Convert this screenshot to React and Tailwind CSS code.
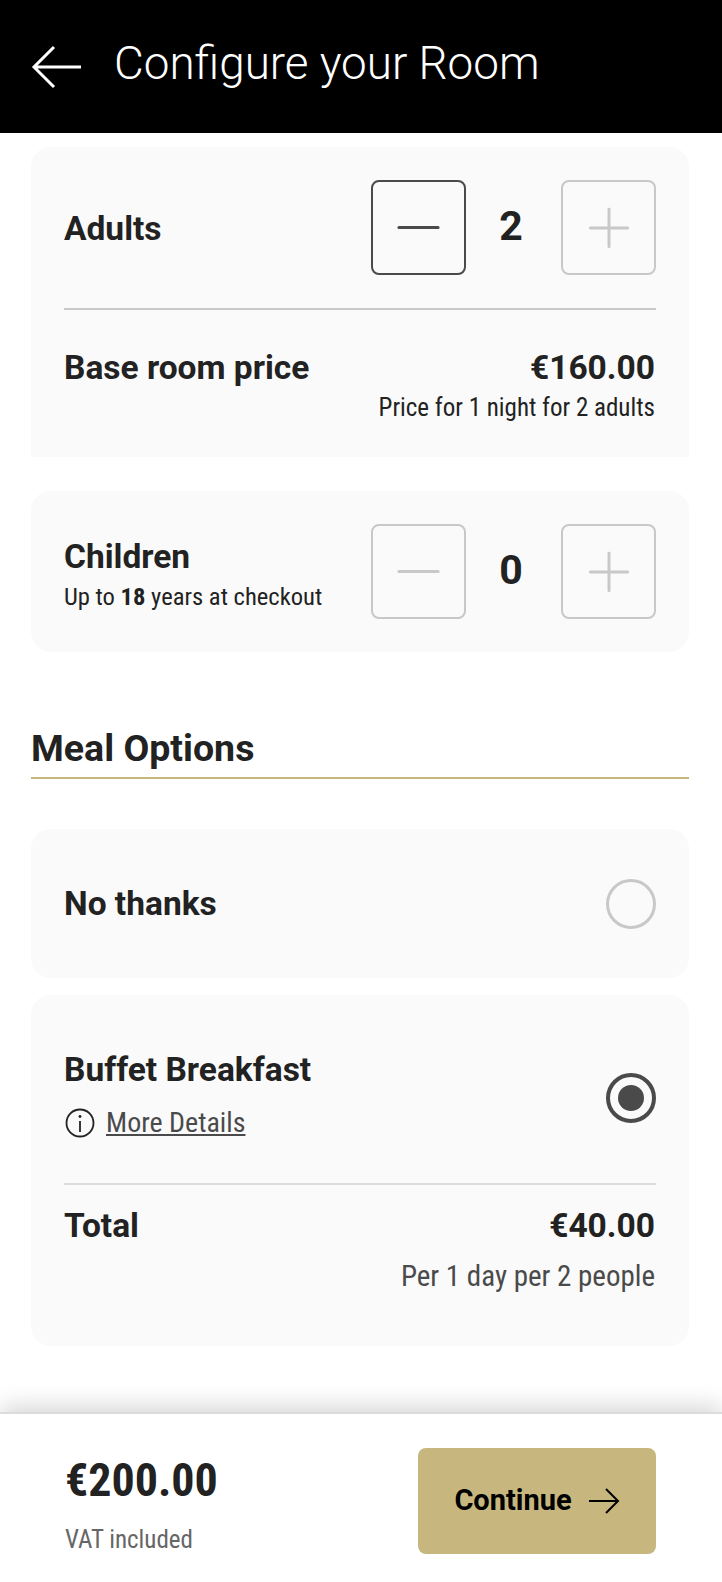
import React from 'react';
import { Minus, Plus } from 'lucide-react';

const Stepper = ({ value, minusActive }) => (
    <div className="flex items-center">
        <button className={`w-[95px] h-[95px] rounded-[8px] border-2 flex items-center justify-center ${minusActive ? 'border-[#4a4a4a] text-[#4a4a4a]' : 'border-[#c8c8c8] text-[#c8c8c8]'}`}>
            <Minus size={67} strokeWidth={1.1} className="shrink-0" />
        </button>
        <span className="w-[90px] mr-[5px] text-center text-[41px] leading-none font-bold text-[#222] -translate-y-[1px]">{value}</span>
        <button className="w-[95px] h-[95px] rounded-[8px] border-2 border-[#c8c8c8] text-[#c8c8c8] flex items-center justify-center">
            <Plus size={64} strokeWidth={1.1} className="shrink-0" />
        </button>
    </div>
);

const BackArrow = () => (
    <svg width="52" height="44" viewBox="0 0 52 44" fill="none" stroke="#fff" strokeWidth="3" className="ml-[31px] shrink-0">
        <path d="M50 22H3M23 2 3 22l20 20" />
    </svg>
);

const NextArrow = () => (
    <svg width="32" height="26" viewBox="0 0 32 26" fill="none" stroke="#000" strokeWidth="2">
        <path d="M1 13h29M18 1l12 12-12 12" />
    </svg>
);

const InfoIcon = () => (
    <svg width="30" height="30" viewBox="0 0 30 30" fill="none" stroke="#222" strokeWidth="1.8">
        <circle cx="15" cy="15" r="13.5" />
        <path d="M15 13v11" />
        <circle cx="15" cy="8.5" r="1.4" fill="#222" stroke="none" />
    </svg>
);

const App = () => {
    return (
        <div className="h-[1582px] w-[722px] flex flex-col bg-white overflow-hidden font-['Roboto',sans-serif] text-[#222]">
            <header className="h-[133px] bg-black text-white flex items-center shrink-0">
                <BackArrow />
                <h1 className="ml-[31px] text-[45.8px] font-light leading-none -translate-y-[3px]">Configure your Room</h1>
            </header>

            <main className="flex-1 pl-[31px] pr-[33px]">
                <section className="mt-[14px] h-[310px] bg-[#fafafa] rounded-t-[20px] px-[33px]">
                    <div className="h-[163px] flex items-center justify-between border-b-2 border-[#c8c8c8]">
                        <span className="pt-[4px] text-[33.5px] font-bold">Adults</span>
                        <Stepper value="2" minusActive />
                    </div>
                    <div className="mt-[36px] pr-[1px] flex justify-between text-[33.5px] font-bold leading-[44px]">
                        <span>Base room price</span>
                        <span>€160.00</span>
                    </div>
                    <p className="mt-[2px] pr-[1px] text-right text-[25px] leading-[32px] [font-stretch:85%]">Price for 1 night for 2 adults</p>
                </section>

                <section className="mt-[34px] h-[161px] bg-[#fafafa] rounded-[20px] px-[33px] flex items-center justify-between">
                    <div className="pt-[5px]">
                        <p className="text-[33.5px] font-bold leading-[44px]">Children</p>
                        <p className="mt-[2px] text-[24.6px] leading-[32px] [font-stretch:85%]">Up to <b>18</b> years at checkout</p>
                    </div>
                    <Stepper value="0" />
                </section>

                <h2 className="mt-[68px] h-[59px] border-b-2 border-[#c4b67c] text-[37.5px] font-bold leading-[56px]">Meal Options</h2>

                <section className="mt-[50px] h-[149px] bg-[#fafafa] rounded-[20px] px-[33px] flex items-center justify-between">
                    <span className="pt-[2px] text-[33.5px] font-bold">No thanks</span>
                    <span className="w-[50px] h-[50px] rounded-full border-[3px] border-[#c8c8c8]" />
                </section>

                <section className="mt-[17px] h-[351px] bg-[#fafafa] rounded-[20px] px-[33px]">
                    <div className="h-[190px] pt-[12px] border-b-2 border-[#dcdcdc] flex items-center justify-between">
                        <div className="pb-[4px]">
                            <p className="text-[33.5px] font-bold leading-[44px]">Buffet Breakfast</p>
                            <div className="mt-[15px] flex items-center gap-[11px] ml-[1px]">
                                <InfoIcon />
                                <a className="text-[28px] leading-[32px] text-[#4a4a4a] underline [font-stretch:85%]">More Details</a>
                            </div>
                        </div>
                        <span className="mt-[6px] w-[50px] h-[50px] rounded-full border-[4px] border-[#4a4a4a] flex items-center justify-center">
                            <span className="w-[26px] h-[26px] rounded-full bg-[#4a4a4a]" />
                        </span>
                    </div>
                    <div className="mt-[19px] pr-[1px] flex justify-between text-[33.5px] font-bold leading-[44px]">
                        <span>Total</span>
                        <span>€40.00</span>
                    </div>
                    <p className="mt-[10px] pr-[1px] text-right text-[29px] leading-[36px] text-[#4a4a4a] [font-stretch:85%]">Per 1 day per 2 people</p>
                </section>
            </main>

            <footer className="h-[170px] pt-[6px] shrink-0 bg-white border-t-2 border-[#dcdcdc] shadow-[0_-6px_22px_rgba(0,0,0,0.16)] flex items-center justify-between pl-[65px] pr-[66px]">
                <div className="pt-[8px]">
                    <p className="text-[46px] font-bold leading-[52px] [font-stretch:85%]">€200.00</p>
                    <p className="mt-[18px] text-[25px] leading-[32px] text-[#666] [font-stretch:85%]">VAT included</p>
                </div>
                <button className="w-[238px] h-[106px] rounded-[8px] bg-[#c7b77f] text-black flex items-center justify-center gap-[16px] text-[29px] font-bold">
                    Continue
                    <NextArrow />
                </button>
            </footer>
        </div>
    );
};

export default App;
